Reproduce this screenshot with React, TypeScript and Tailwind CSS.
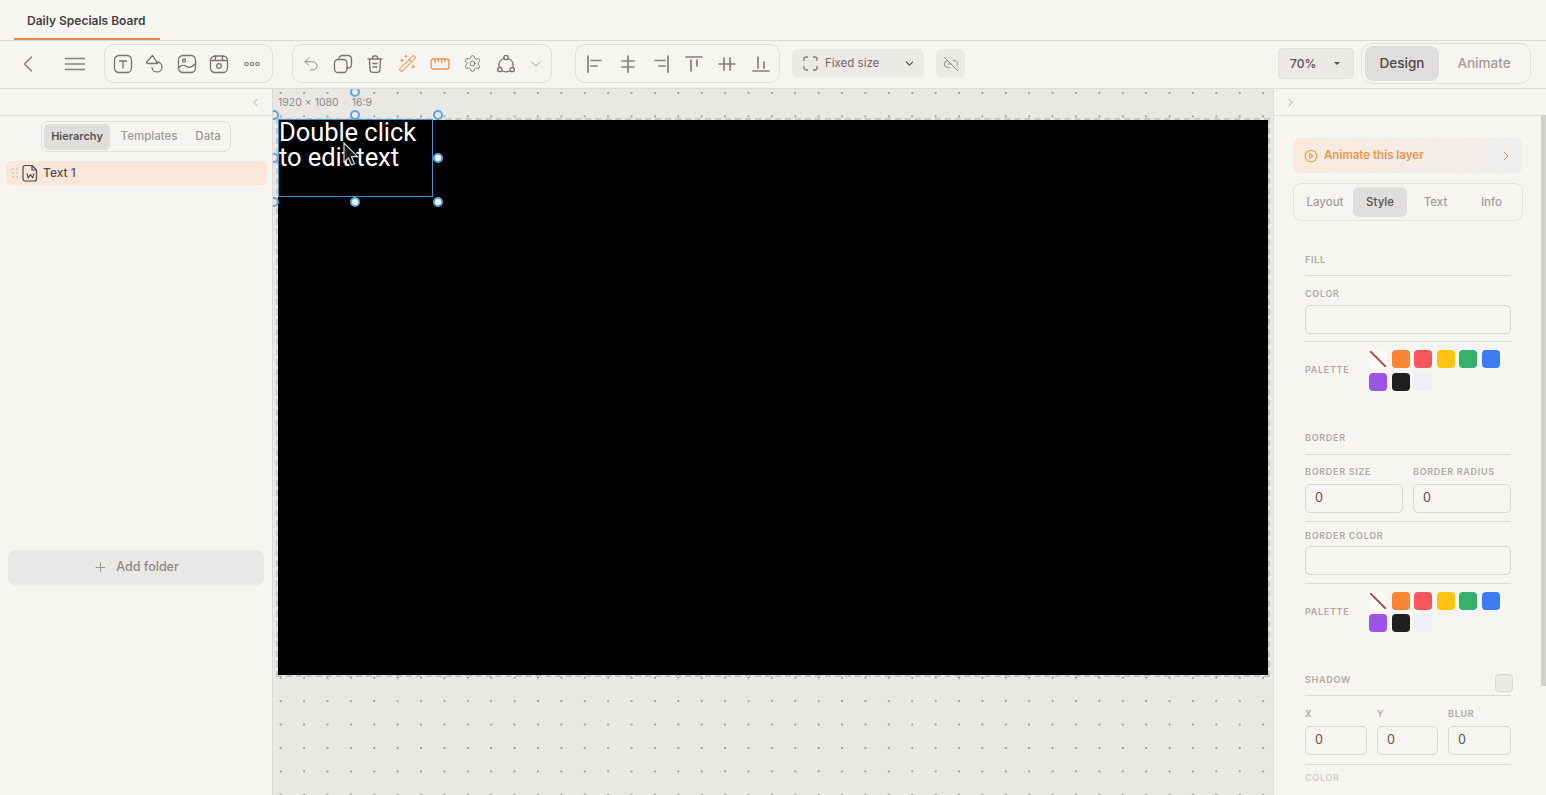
import React from "react";
import { ChevronLeft, ChevronRight, ChevronDown, Undo2, WandSparkles, Settings, Plus, Link2Off } from "lucide-react";

const sw = ["#fb8532", "#f7565f", "#fdc40f", "#34b26b", "#3b7bf6", "#9b55e8", "#1d1f21", "#eff0f3"];

function Ico({ children, className = "text-[#77736e]" }: { children: React.ReactNode; className?: string }) {
  return (
    <svg width="20" height="20" viewBox="0 0 20 20" fill="none" stroke="currentColor" strokeWidth="1.3" strokeLinecap="round" strokeLinejoin="round" className={className}>
      {children}
    </svg>
  );
}

function Slot({ w, children }: { w: string; children: React.ReactNode }) {
  return <div className={`${w} flex items-center justify-center shrink-0`}>{children}</div>;
}

function Label({ children, className = "" }: { children: React.ReactNode; className?: string }) {
  return <div className={`text-[9px] leading-[12px] font-semibold tracking-[0.7px] text-[#aeaba6] ${className}`}>{children}</div>;
}

function Rule({ className = "" }: { className?: string }) {
  return <div className={`h-px bg-[#dddbd7] ${className}`} />;
}

function Field({ value, className = "" }: { value?: string; className?: string }) {
  return (
    <div className={`h-[29px] rounded-[5px] border border-[#dad8d4] bg-[#f6f5f2] pl-[9px] flex items-center text-[12.5px] text-[#55524e] ${className}`}>{value}</div>
  );
}

function Palette() {
  return (
    <div className="flex items-center">
      <Label className="w-[64px] shrink-0">PALETTE</Label>
      <div className="w-[136px] flex flex-wrap gap-x-[4.5px] gap-y-[4.5px]">
        <div className="w-[18px] h-[18px] rounded-[4px] bg-[#fcfbfa] overflow-hidden">
          <svg width="18" height="18" viewBox="0 0 18 18"><line x1="1" y1="1" x2="17" y2="17" stroke="#a84a46" strokeWidth="1.800" /></svg>
        </div>
        {sw.map((c) => (
          <div key={c} className="w-[18px] h-[18px] rounded-[4px]" style={{ background: c }} />
        ))}
      </div>
    </div>
  );
}

function Handle({ className, open = false }: { className: string; open?: boolean }) {
  return (
    <div className={`absolute w-[10px] h-[10px] rounded-full border-[2px] border-[#5aa9de] ${open ? "bg-transparent" : "bg-white"} ${className}`} />
  );
}

export default function App() {
  return (
    <div className="h-[795px] w-[1546px] overflow-hidden flex flex-col bg-[#f6f5f2] font-['Inter','Liberation_Sans',sans-serif] text-[#4b4845]">
      {/* tab bar */}
      <div className="h-[41px] shrink-0 border-b border-[#dcdad6] pl-[14px] flex">
        <div className="w-[146px] h-[40px] border-b-2 border-[#e08a52] pl-[13px] pt-[12px] text-[12px] leading-[18px] font-semibold text-[#45423f]">
          Daily Specials Board
        </div>
      </div>

      {/* toolbar */}
      <div className="h-[48px] shrink-0 border-b border-[#dfddd9] flex items-center relative pb-[2px]">
        <div className="w-[104px] shrink-0 flex items-center">
          <Slot w="w-[56px]"><ChevronLeft size={28} strokeWidth={1.3} className="text-[#85817c]" /></Slot>
          <Slot w="w-[38px]">
            <svg width="22" height="16" viewBox="0 0 22 16" stroke="#85817c" strokeWidth="1.5" strokeLinecap="round"><path d="M1.5 2.5h19M1.5 8h19M1.5 13.500h19" /></svg>
          </Slot>
        </div>
        <div className="w-[169px] h-[39px] shrink-0 rounded-[10px] border border-[#e1dfdb] flex items-center pl-[2px]">
          <Slot w="w-[32px]"><Ico><rect x="1.500" y="1.500" width="17" height="17" rx="4.500" /><path d="M6.500 7h7M10 7v7" /></Ico></Slot>
          <Slot w="w-[32px]"><Ico><path d="M7.500 1.500 12.500 9.500H2.500a1 1 0 0 1-.800-1.500z" /><path d="M12.500 8a5 5 0 1 1-5.500 5.500" /></Ico></Slot>
          <Slot w="w-[32px]"><Ico><rect x="1.500" y="1.500" width="17" height="17" rx="4.500" /><circle cx="7" cy="6.500" r="1.500" /><path d="M1.800 13.500c3.500-3.500 5.500-2.500 7.500-1s4.500 1.500 9-2.500" /></Ico></Slot>
          <Slot w="w-[32px]"><Ico><rect x="1.500" y="2" width="17" height="16.500" rx="4.500" /><path d="M1.800 6.500h16.400M6.500 2v4.500M13.500 2v4.500" /><circle cx="10" cy="12" r="2.300" /></Ico></Slot>
          <Slot w="w-[34px]"><Ico className="text-[#8d8984]"><circle cx="4.500" cy="10" r="1.700" /><circle cx="10" cy="10" r="1.700" /><circle cx="15.500" cy="10" r="1.700" /></Ico></Slot>
        </div>
        <div className="w-[260px] h-[39px] shrink-0 ml-[19px] rounded-[10px] border border-[#e1dfdb] flex items-center pl-[2px]">
          <Slot w="w-[32px]"><Undo2 size={18} strokeWidth={1.2} className="text-[#85817c]" /></Slot>
          <Slot w="w-[32px]"><Ico><rect x="1.500" y="5.500" width="12.500" height="13" rx="3.500" /><path d="M6 5.500V5a3.500 3.500 0 0 1 3.500-3.500h5.500A3.500 3.500 0 0 1 18.500 5v5.500a3.500 3.500 0 0 1-3.500 3.500h-1" /></Ico></Slot>
          <Slot w="w-[32px]"><Ico><path d="M3 5h14M7.500 5V3.500a1.500 1.500 0 0 1 1.500-1.500h2a1.500 1.500 0 0 1 1.500 1.500V5M4.500 5l.6 11a2.500 2.500 0 0 0 2.500 2.300h4.800a2.500 2.500 0 0 0 2.500-2.300l.6-11M8 9.500h4M8 13h4" /></Ico></Slot>
          <Slot w="w-[32px]"><WandSparkles size={19} strokeWidth={1.3} className="text-[#ec9a52]" /></Slot>
          <Slot w="w-[33px]">
            <svg width="20" height="12" viewBox="0 0 20 12" fill="none" stroke="#ec9a52" strokeWidth="1.4" strokeLinecap="round"><rect x="1" y="1" width="18" height="10" rx="2.500" /><path d="M5 1v3.500M8.300 1v2.500M11.700 1v3.500M15 1v2.500" /></svg>
          </Slot>
          <Slot w="w-[33px]"><Settings size={19} strokeWidth={1.2} className="text-[#77736e]" /></Slot>
          <Slot w="w-[33px]"><Ico><circle cx="10" cy="3.500" r="2.200" /><circle cx="3.800" cy="15.500" r="2.200" /><circle cx="16.200" cy="15.500" r="2.200" /><path d="M7.800 4.500A7.500 7.500 0 0 0 3 12.500M12.200 4.500A7.500 7.500 0 0 1 17 12.500M6.500 17a8 8 0 0 0 7 0" /></Ico></Slot>
          <Slot w="w-[28px]"><ChevronDown size={16} strokeWidth={1.2} className="text-[#8d8984]" /></Slot>
        </div>
        <div className="w-[205px] h-[39px] shrink-0 ml-[23px] rounded-[10px] border border-[#e1dfdb] flex items-center pl-[2px]">
          <Slot w="w-[33px]"><Ico className="text-[#85817c]"><path d="M3 2v16M6 6.500h10M6 12h6" strokeWidth="1.700" /></Ico></Slot>
          <Slot w="w-[33px]"><Ico className="text-[#85817c]"><path d="M10 2v16M4 7h12M4 13h12" strokeWidth="1.700" /></Ico></Slot>
          <Slot w="w-[33px]"><Ico className="text-[#85817c]"><path d="M17 2v16M4 6.500h10M8 12h6" strokeWidth="1.700" /></Ico></Slot>
          <Slot w="w-[33px]"><Ico className="text-[#85817c]"><path d="M2 3h16M7 6v11M13 6v6" strokeWidth="1.700" /></Ico></Slot>
          <Slot w="w-[34px]"><Ico className="text-[#85817c]"><path d="M2 10h16M7 4v12M13 4v12" strokeWidth="1.700" /></Ico></Slot>
          <Slot w="w-[33px]"><Ico className="text-[#85817c]"><path d="M2 17h16M7 3v11M13 8v6" strokeWidth="1.700" /></Ico></Slot>
        </div>
        <div className="w-[132px] h-[29px] shrink-0 ml-[12px] rounded-[6px] bg-[#ebeae7] flex items-center pl-[11px] text-[11.500px] text-[#6b6763]">
          <svg width="15" height="15" viewBox="0 0 15 15" fill="none" stroke="#7c7873" strokeWidth="1.300" strokeLinecap="round"><path d="M1 4.500V3a2 2 0 0 1 2-2h1.500M10.500 1H12a2 2 0 0 1 2 2v1.500M14 10.500V12a2 2 0 0 1-2 2h-1.500M4.500 14H3a2 2 0 0 1-2-2v-1.500" /></svg>
          <span className="ml-[7px] w-[78px]">Fixed size</span>
          <ChevronDown size={13} strokeWidth={2.2} className="text-[#55524e]" />
        </div>
        <div className="w-[29px] h-[29px] shrink-0 ml-[12px] rounded-[6px] bg-[#ebeae7] flex items-center justify-center">
          <Link2Off size={16} strokeWidth={1.3} className="text-[#85817c]" />
        </div>
        <div className="ml-auto flex items-center">
          <div className="w-[76px] h-[31px] rounded-[5px] border border-[#e3e1dd] bg-[#ebeae7] flex items-center pl-[11px] text-[12px] font-medium text-[#55524e]">
            <span className="w-[44px]">70%</span>
            <span className="w-0 h-0 border-x-[3px] border-x-transparent border-t-[3px] border-t-[#55524e]" />
          </div>
          <div className="w-[170px] h-[41px] ml-[7px] mr-[15px] rounded-[11px] border border-[#e1dfdb] flex items-center pl-[3px]">
            <div className="w-[74px] h-[35px] rounded-[8px] bg-[#dfdedc] flex items-center justify-center text-[13.500px] font-medium text-[#4b4845]">Design</div>
            <div className="w-[90px] text-center text-[13.500px] font-medium text-[#a09d98]">Animate</div>
          </div>
        </div>
      </div>

      {/* body */}
      <div className="flex-1 flex min-h-0">
        {/* left panel */}
        <div className="w-[273px] shrink-0 border-r border-[#dcdad6] flex flex-col">
          <div className="h-[27px] shrink-0 border-b border-[#dfddd9] flex items-center justify-end pr-[10px]">
            <ChevronLeft size={13} strokeWidth={1.500} className="text-[#9c9994]" />
          </div>
          <div className="pl-[41px] pt-[5px]">
            <div className="w-[190px] h-[31px] rounded-[7px] border border-[#e1dfdb] flex items-center pl-[2px] text-[11.500px] text-[#9c9994] font-medium">
              <div className="w-[66px] h-[26px] rounded-[5px] bg-[#dfdedc] flex items-center justify-center text-[#55524e] font-semibold text-[11px]">Hierarchy</div>
              <div className="w-[78px] text-center">Templates</div>
              <div className="w-[40px] text-center">Data</div>
            </div>
          </div>
          <div className="mt-[9px] ml-[6px] w-[261px] h-[24px] rounded-[5px] bg-[#f9e7da] flex items-center pl-[4px] text-[12px] font-medium text-[#55524e]">
            <svg width="10" height="12" viewBox="0 0 10 12" fill="#d6c9bd" className="mr-[2px]"><circle cx="3" cy="2" r="1" /><circle cx="7" cy="2" r="1" /><circle cx="3" cy="6" r="1" /><circle cx="7" cy="6" r="1" /><circle cx="3" cy="10" r="1" /><circle cx="7" cy="10" r="1" /></svg>
            <svg width="17" height="18" viewBox="0 0 17 18" fill="none" stroke="#4b4845" strokeWidth="1.200" strokeLinejoin="round" className="mr-[4px]">
              <path d="M3 1.500h7l4.500 4.500v9a2 2 0 0 1-2 2h-9.500a2 2 0 0 1-2-2v-11.500a2 2 0 0 1 2-2z" />
              <path d="M10 1.500V6h4.500" />
              <path d="M5 9.500l1.300 4.500 2.200-3.500 2.200 3.500L12 9.500" strokeWidth="1.100" />
            </svg>
            Text 1
          </div>
          <div className="mt-[365px] ml-[8px] w-[256px] h-[35px] rounded-[7px] bg-[#e9e8e6] flex items-center justify-center text-[12.500px] font-medium text-[#8d8984]">
            <Plus size={15} strokeWidth={1.300} className="mr-[8px] text-[#85817c]" />
            Add folder
          </div>
        </div>

        {/* canvas */}
        <div className="w-[1000px] shrink-0 relative overflow-hidden bg-[#e9e8e5] bg-[radial-gradient(circle,#a3a19d_0.9px,transparent_1.3px)] bg-[length:23.4px_23.4px] bg-[position:-4px_-7.700px]">
          <div className="absolute left-[5px] top-[31px] w-[990px] h-[555px] bg-black outline-dashed outline-2 outline-[#c9c7c3]" />
          <div className="absolute left-[5px] top-[7px] text-[10.500px] leading-[14px] text-[#8d8984]">1920 × 1080 <span className="text-[#c5c3bf] mx-[2px]">·</span> 16:9</div>
          <div className="absolute left-[5px] top-[30px] w-[155px] h-[78px] border border-[#4a90c8] font-['Roboto',sans-serif] text-[25.500px] leading-[25px] text-white -tracking-[0.05px]">
            Double click<br />to edit text
          </div>
          <svg width="24" height="28" viewBox="0 0 24 28" className="absolute left-[70px] top-[53px]" fill="#1a1a1a" stroke="#d9d9d9" strokeWidth="1.200"><path d="M1 1v19l4.500-4 3 7 3-1.300-3-7h6z" /></svg>
          <Handle open className="left-[77px] top-[-2px]" />
          <Handle open className="left-[-4px] top-[21px]" />
          <Handle open className="left-[77px] top-[21px]" />
          <Handle open className="left-[160px] top-[21px]" />
          <Handle open className="left-[-4px] top-[64px]" />
          <Handle className="left-[160px] top-[64px]" />
          <Handle open className="left-[-4px] top-[108px]" />
          <Handle className="left-[77px] top-[108px]" />
          <Handle className="left-[160px] top-[108px]" />
        </div>

        {/* right panel */}
        <div className="flex-1 border-l border-[#dfddd9] flex flex-col relative min-w-0">
          <div className="h-[27px] shrink-0 border-b border-[#dfddd9] flex items-center pl-[10px]">
            <ChevronRight size={13} strokeWidth={1.500} className="text-[#9c9994]" />
          </div>
          <div className="absolute right-0 top-[26px] w-[5px] h-[571px] bg-[#d3d2cf]" />
          <div className="pl-[19px] pt-[22px] w-[268px]">
            <div className="w-[230px] h-[35px] rounded-[7px] bg-gradient-to-r from-[#fae9dc] to-[#eeeff0] flex items-center pl-[11px] pr-[9px] text-[11.500px] font-semibold text-[#ec9650]">
              <svg width="14" height="14" viewBox="0 0 14 14" fill="none" stroke="#ec9a52" strokeWidth="1.100" className="mr-[6px]"><circle cx="7" cy="7" r="5.800" /><path d="M5.700 4.700 9 7l-3.300 2.300z" /></svg>
              <span className="flex-1">Animate this layer</span>
              <ChevronRight size={16} strokeWidth={1.300} className="text-[#d08f62]" />
            </div>
            <div className="mt-[10px] w-[230px] h-[38px] rounded-[8px] border border-[#e6e4e0] flex items-center pl-[3px] text-[11.500px] text-[#a09d98] font-medium">
              <div className="w-[56px] text-center pt-px">Layout</div>
              <div className="w-[54px] h-[30px] rounded-[6px] bg-[#dfdedc] flex items-center justify-center text-[#55524e] pt-px">Style</div>
              <div className="w-[57px] text-center pt-px">Text</div>
              <div className="w-[55px] text-center pt-px">Info</div>
            </div>

            <div className="ml-[12px] w-[206px]">
              <Label className="mt-[33px]">FILL</Label>
              <Rule className="mt-[9px]" />
              <Label className="mt-[12px]">COLOR</Label>
              <Field className="mt-[5px]" />
              <Rule className="mt-[7px]" />
              <div className="mt-[8px]"><Palette /></div>
              <Label className="mt-[41px]">BORDER</Label>
              <Rule className="mt-[10px]" />
              <div className="mt-[11px] grid grid-cols-[98px_98px] gap-x-[10px]">
                <Label>BORDER SIZE</Label>
                <Label>BORDER RADIUS</Label>
                <Field value="0" className="mt-[6px]" />
                <Field value="0" className="mt-[6px]" />
              </div>
              <Rule className="mt-[8px]" />
              <Label className="mt-[8px]">BORDER COLOR</Label>
              <Field className="mt-[4px]" />
              <Rule className="mt-[8px]" />
              <div className="mt-[8px]"><Palette /></div>
              <div className="mt-[39px] flex items-center justify-between h-[18px]">
                <Label>SHADOW</Label>
                <div className="w-[18px] h-[18px] -mr-[2px] mt-[6px] rounded-[4px] border border-[#dad8d4] bg-[#ebeae7]" />
              </div>
              <Rule className="mt-[6px]" />
              <div className="mt-[12px] grid grid-cols-[62px_61px_63px] gap-x-[10px]">
                <Label>X</Label>
                <Label>Y</Label>
                <Label>BLUR</Label>
                <Field value="0" className="mt-[6px]" />
                <Field value="0" className="mt-[6px]" />
                <Field value="0" className="mt-[6px]" />
              </div>
              <Rule className="mt-[9px]" />
              <Label className="mt-[7px] opacity-50">COLOR</Label>
            </div>
          </div>
        </div>
      </div>
    </div>
  );
}
